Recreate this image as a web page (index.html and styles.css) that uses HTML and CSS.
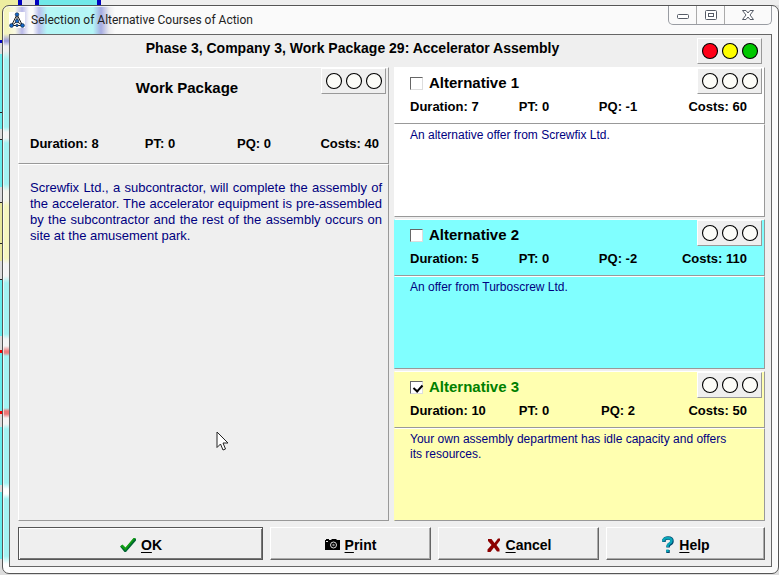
FILE: index.html
```html
<!DOCTYPE html>
<html lang="en">
<head>
<meta charset="utf-8">
<title>Selection of Alternative Courses of Action</title>
<link rel="stylesheet" href="styles.css">
</head>
<body>
<svg class="defs" aria-hidden="true">
  <symbol id="lights" viewBox="0 0 61 22">
    <g stroke="#000" stroke-width="1.1">
      <circle class="lamp-a" cx="11" cy="11" r="7.500"/>
      <circle class="lamp-b" cx="31" cy="11" r="7.500"/>
      <circle class="lamp-c" cx="51" cy="11" r="7.500"/>
    </g>
  </symbol>
</svg>
<main class="window">
  <header class="titlebar">
    <svg class="app-icon" viewBox="0 0 16 16" aria-hidden="true">
      <rect width="16" height="16" fill="#fff"/>
      <path d="M8 2.500 2.500 13.500h11zM8 2.500v7L2.500 13.500M8 9.500l5.500 4" fill="none" stroke="#222" stroke-width="1"/>
      <g fill="#1768c8" stroke="#123" stroke-width=".6"><circle cx="8" cy="2.500" r="1.800"/><circle cx="8" cy="9" r="1.800"/><circle cx="2.500" cy="13.500" r="1.900"/><circle cx="13.500" cy="13.500" r="1.900"/><circle cx="8" cy="13.500" r="1.200"/></g>
    </svg>
    <span class="caption">Selection of Alternative Courses of Action</span>
    <div class="window-buttons">
      <button type="button" aria-label="Minimize"><svg width="14" height="12" viewBox="0 0 14 12"><rect x="1.500" y="5.500" width="11" height="4" rx="1" fill="#fff" stroke="#555b66"/></svg></button>
      <button type="button" aria-label="Maximize"><svg width="14" height="12" viewBox="0 0 14 12"><rect x="1.500" y="1.500" width="11" height="9" rx="1" fill="#fff" stroke="#555b66"/><rect x="4.500" y="4.500" width="5" height="3" fill="#fff" stroke="#555b66"/></svg></button>
      <button type="button" class="close" aria-label="Close"><svg width="14" height="12" viewBox="0 0 14 12"><path d="M1.500 1.500H5L7 4l2-2.500h3.500L9 6l3.500 4.500H9L7 8l-2 2.500H1.500L5 6z" fill="#fff" stroke="#555b66"/></svg></button>
    </div>
  </header>

  <form class="client">
    <div class="heading">
      <h1>Phase 3, Company 3, Work Package 29: Accelerator Assembly</h1>
      <svg class="lights lit" role="img" aria-label="Red, yellow, green"><use href="#lights"/></svg>
    </div>

    <div class="columns">
      <section class="package">
        <div class="panel package-head">
          <h2>Work Package</h2>
          <svg class="lights" aria-hidden="true"><use href="#lights"/></svg>
          <div class="stats"><span>Duration: 8</span><span>PT: 0</span><span>PQ: 0</span><span>Costs: 40</span></div>
        </div>
        <div class="panel package-text"><p>Screwfix Ltd., a subcontractor, will complete the assembly of the accelerator. The accelerator equipment is pre-assembled by the subcontractor and the rest of the assembly occurs on site at the amusement park.</p></div>
      </section>

      <div class="alternatives">
        <section class="alternative white">
          <div class="panel alt-head">
            <label><input type="checkbox"><span>Alternative 1</span></label>
            <svg class="lights" aria-hidden="true"><use href="#lights"/></svg>
            <div class="stats"><span>Duration: 7</span><span>PT: 0</span><span>PQ: -1</span><span>Costs: 60</span></div>
          </div>
          <div class="panel alt-text"><p>An alternative offer from Screwfix Ltd.</p></div>
        </section>
        <section class="alternative cyan">
          <div class="panel alt-head">
            <label><input type="checkbox"><span>Alternative 2</span></label>
            <svg class="lights" aria-hidden="true"><use href="#lights"/></svg>
            <div class="stats"><span>Duration: 5</span><span>PT: 0</span><span>PQ: -2</span><span>Costs: 110</span></div>
          </div>
          <div class="panel alt-text"><p>An offer from Turboscrew Ltd.</p></div>
        </section>
        <section class="alternative yellow">
          <div class="panel alt-head">
            <label><input type="checkbox" checked><span>Alternative 3</span></label>
            <svg class="lights" aria-hidden="true"><use href="#lights"/></svg>
            <div class="stats"><span>Duration: 10</span><span>PT: 0</span><span>PQ: 2</span><span>Costs: 50</span></div>
          </div>
          <div class="panel alt-text"><p>Your own assembly department has idle capacity and offers its resources.</p></div>
        </section>
      </div>
    </div>

    <div class="actions">
      <button type="button" class="default"><svg width="18" height="16" viewBox="0 0 18 16" aria-hidden="true"><path d="M1 9.500 3.500 8l3 3L14.500 1.500H17v2L7 15H5.500z" fill="#063" /><path d="M1.500 9 3.500 7.500l3 3L14.500 1h2L6.500 13.500z" fill="#12a012"/></svg><span><u>O</u>K</span></button>
      <button type="button"><svg width="16" height="16" viewBox="0 0 16 16" aria-hidden="true"><path d="M0 3h1V2h3v1h2l1-1h4l1 1h3v10H0z" fill="#000"/><circle cx="8.500" cy="8" r="3" fill="#000" stroke="#ddd"/><circle cx="8.500" cy="8" r="1.200" fill="#888"/><path d="M1 4.500h2" stroke="#ddd"/></svg><span><u>P</u>rint</span></button>
      <button type="button"><svg width="16" height="16" viewBox="0 0 16 16" aria-hidden="true"><path d="M2 2h3.500l3 4 3.500-4.500h2V3.500L10.500 8l3 4v2.500H11L8 10.500 4.500 15H1.500v-2.500L5.500 8 2 4z" fill="#8c0000"/></svg><span><u>C</u>ancel</span></button>
      <button type="button"><svg width="14" height="18" viewBox="0 0 14 18" aria-hidden="true"><path d="M3 6V4q1-2 4-2 4 0 4 3 0 2-2 3-2 1-2 3.500M7 14v3" fill="none" stroke="#024a70" stroke-width="3.500"/><path d="M2.500 5.500V4q1-2 4-2 4 0 4 2.500 0 2-2 3-2 1-2 3.500M6.500 13.500v2.500" fill="none" stroke="#0aa5b8" stroke-width="2.500"/></svg><span><u>H</u>elp</span></button>
    </div>
  </form>
</main>
<svg class="pointer" width="13" height="21" viewBox="0 0 13 21" aria-hidden="true"><path d="M1 1v15.500l3.500-3.500 2.500 6 2.500-1-2.500-6h5z" fill="#fff" stroke="#222"/></svg>
</body>
</html>
```
FILE: styles.css
```css
* { box-sizing: border-box; }

body {
  margin: 0;
  height: 100vh;
  min-height: 500px;
  display: flex;
  padding: 5px 0 1px 2px;
  position: relative;
  overflow: hidden;
  font: 12px/15px "Liberation Sans", Arial, sans-serif;
  color: #000;
  background:
    linear-gradient(90deg, #eeeea0 18px, #0000c0 18px 22px, #e4e4e4 22px 35px, #0000c0 35px 39px, #70e8e8 39px 97px, #0000c0 97px 101px, #eee 101px) 0 0 / 100% 5px no-repeat,
    linear-gradient(#eeeea0 40px, #0000c0 40px 43px, #ddd 43px 54px, #6ee 54px 112px, #222 112px 113px, #6ee 113px 129px, #ddd 129px 139px, #222 139px 140px, #6ee 140px 187px, #ddd 187px 202px, #222 202px 203px, #e8e89a 203px 243px, #222 243px 244px, #e8e89a 244px 261px, #ddd 261px 279px, #222 279px 280px, #6ee 280px 336px, #ddd 336px 350px, #e00 350px 353px, #6ee 353px 411px, #e00 411px 414px, #ddd 414px 427px, #6ee 427px 485px, #ddd 485px 492px, #6ee 492px 559px, #ddd 559px) 0 0 / 10px 100% no-repeat,
    #ddd;
}

.defs { position: absolute; width: 0; height: 0; }

.window {
  flex: 1;
  display: flex;
  flex-direction: column;
  padding: 0 6px 6px;
  border: 1px solid #555;
  border-radius: 7px;
  box-shadow: inset 0 0 0 1px rgba(255, 255, 255, .7);
  background:
    linear-gradient(90deg, #f4f4b8, rgba(250, 250, 210, .6) 12px, rgba(120, 120, 215, .5) 19px, rgba(255, 255, 255, 0) 26px 30px, rgba(120, 130, 220, .5) 36px, #b4f6f6 44px 90px, rgba(110, 120, 210, .6) 98px, rgba(230, 230, 235, .8) 106px, rgba(255, 255, 255, 0) 112px) 0 0 / 100% 28px no-repeat,
    linear-gradient(#f4f4c0 28px, #99d 35px, #eee 40px 45px, #a4f4f4 54px 121px, #f4f4f4 126px 132px, #a4f4f4 137px 178px, #f5f5ec 185px 194px, #f6f6c0 200px 252px, #f4f4f4 258px 270px, #a4f4f4 277px 328px, #f4f4f4 333px 340px, #f08080 345px 347px, #a4f4f4 350px 402px, #e77 405px 408px, #f4f4f4 412px 418px, #a4f4f4 423px 477px, #fff 483px 488px, #a4f4f4 493px 550px, #fff 558px) 0 0 / 7px 100% no-repeat,
    #fafafa;
}

.titlebar {
  flex: none;
  height: 28px;
  display: flex;
  align-items: center;
  gap: 6px;
}

.app-icon { width: 16px; height: 16px; }

.caption {
  flex: 1;
  font: 12px/16px Roboto, "Open Sans", sans-serif;
  color: #222;
}

.window-buttons {
  align-self: flex-start;
  display: flex;
  height: 19px;
  border: 1px solid #999ca2;
  border-top: 0;
  border-radius: 0 0 5px 5px;
}

.window-buttons button {
  display: grid;
  place-items: center;
  width: 28px;
  padding: 0;
  border: 0;
  border-right: 1px solid #aaa;
  background: transparent;
}

.window-buttons .close { width: 46px; border: 0; }

.client {
  flex: 1;
  min-height: 0;
  display: flex;
  flex-direction: column;
  padding: 0 6px 6px 8px;
  border: 1px solid #666;
  background: #efefef;
}

.heading {
  display: flex;
  align-items: flex-start;
  height: 32px;
  padding: 3px 3px 0 0;
}

h1, h2, p { margin: 0; }

h1 {
  flex: 1;
  padding: 2px 10px 0 0;
  font-size: 14px;
  line-height: 16px;
  text-align: center;
}

.lights {
  flex: none;
  width: 65px;
  height: 26px;
  padding: 1px;
  border: 1px solid;
  border-color: #fff #999 #999 #fff;
  background: #efefef;
}

.lit { --a: #ff0018; --b: #ffff00; --c: #00c800; }
.lamp-a { fill: var(--a, #fcfcf8); }
.lamp-b { fill: var(--b, #fcfcf8); }
.lamp-c { fill: var(--c, #fcfcf8); }

.columns {
  flex: 1;
  min-height: 0;
  display: grid;
  grid-template-columns: 1fr 1fr;
  gap: 5px;
}

.package { display: flex; flex-direction: column; }

.panel {
  border: 1px solid;
  border-color: #fff #999 #999 #fff;
}

.package-head {
  display: grid;
  grid-template-columns: 1fr auto;
  grid-template-rows: 1fr auto;
  height: 97px;
  padding: 0 2px 11px 11px;
}

.package-head h2 {
  grid-area: 1 / 1 / 2 / 3;
  padding: 11px 42px 0 0;
  font-size: 15px;
  line-height: 18px;
  text-align: center;
}

.package-head .lights { grid-area: 1 / 2; }

.stats {
  grid-column: 1 / -1;
  display: grid;
  grid-template-columns: 94fr 60fr 108fr 75fr;
  font-size: 13px;
  line-height: 16px;
  font-weight: bold;
  white-space: nowrap;
  text-align: center;
}

.package .stats { grid-template-columns: 100fr 60fr 128fr 61fr; padding-right: 7px; }
.stats span:first-child { text-align: left; }
.stats span:last-child { justify-self: end; }

.package-text {
  flex: 1;
  padding: 15px 6px 0 11px;
  font-size: 13px;
  line-height: 16px;
  color: #000080;
  text-align: justify;
}

.alternatives {
  display: grid;
  grid-template-rows: repeat(3, 1fr);
  gap: 2px;
}

.alternative { display: flex; flex-direction: column; }
.white .panel { background: #fff; }
.cyan .panel { background: #80ffff; }
.yellow .panel { background: #ffffb0; }
.alternative .panel { border-left-color: transparent; }

.alt-head {
  display: grid;
  grid-template-columns: 1fr auto;
  grid-template-rows: 26px auto;
  height: 57px;
  padding: 0 2px 0 15px;
}

.alt-head label {
  display: flex;
  align-items: center;
  gap: 6px;
  padding-top: 4px;
  font-size: 15px;
  line-height: 18px;
  font-weight: bold;
}

.alt-head .stats { padding: 5px 15px 0 0; }

.alt-head input {
  appearance: none;
  position: relative;
  width: 13px;
  height: 13px;
  margin: 0;
  border: 1px solid;
  border-color: #666 #ddd #ddd #666;
  background: #fff;
}

.alt-head input:checked::after {
  content: "";
  position: absolute;
  left: 4px;
  top: 1px;
  width: 4px;
  height: 7px;
  border: solid #000;
  border-width: 0 2px 2px 0;
  transform: rotate(42deg);
}

.alt-head input:checked + span { color: #008000; }

.alt-text {
  flex: 1;
  padding: 3px 25px 0 15px;
  color: #000080;
}

.actions {
  display: grid;
  grid-template-columns: 245fr 161fr 161fr 159fr;
  gap: 7px;
  padding-top: 6px;
}

.actions button {
  display: flex;
  align-items: center;
  justify-content: center;
  gap: 4px;
  height: 33px;
  padding: 2px 0 0;
  border: 1px solid;
  border-color: #fff #666 #666 #fff;
  box-shadow: inset -1px -1px #aaa;
  background: #efefef;
  font: bold 14px/16px "Liberation Sans", Arial, sans-serif;
  color: #000;
}

.actions .default {
  border-color: #555;
  box-shadow: inset 1px 1px #fff, inset -1px -1px #777;
}

.actions u { text-underline-offset: 2px; text-decoration-thickness: 1px; }

.pointer { position: absolute; left: 216px; top: 431px; }
```
